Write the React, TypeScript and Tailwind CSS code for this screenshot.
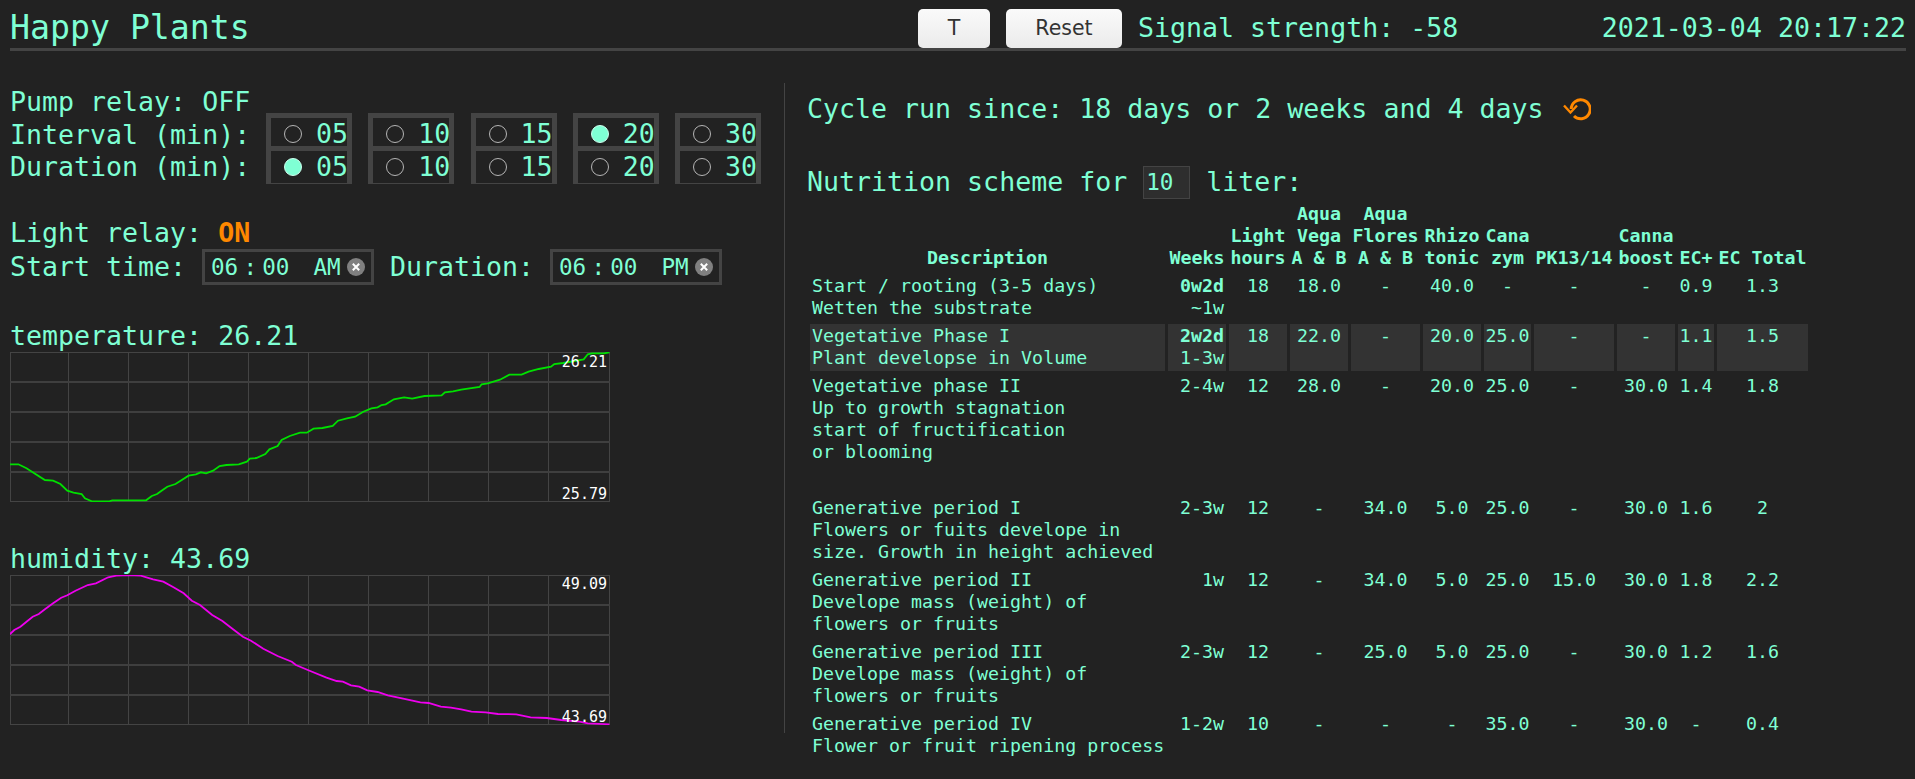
const intervals = ['05', '10', '15', '20', '30'];

const tempTrace = [
  [24, 463], [45, 463], [65, 475], [80, 487], [110, 510], [130, 512], [148, 522], [165, 542], [180, 548], [200, 552],
  [208, 565], [225, 574], [268, 574], [275, 571], [358, 571], [372, 558], [385, 552], [395, 543], [410, 530], [430, 522],
  [462, 497], [480, 493], [492, 487], [505, 490], [522, 482], [538, 468], [555, 465], [585, 463], [605, 455], [612, 446],
  [628, 444], [650, 432], [660, 418], [680, 408], [690, 390], [710, 378], [735, 368], [752, 368], [768, 356], [790, 354],
  [815, 348], [828, 332], [850, 325], [870, 320], [890, 305], [910, 295], [925, 292], [935, 285], [945, 283], [965, 268],
  [990, 262], [1010, 266], [1040, 258], [1082, 256], [1090, 247], [1110, 244], [1130, 239], [1175, 231], [1180, 223], [1195, 220],
  [1225, 209], [1248, 194], [1278, 194], [1295, 185], [1320, 177], [1350, 170], [1358, 162], [1380, 159], [1430, 148], [1440, 133],
  [1450, 130], [1480, 130], [1493, 127],
];

const humidityTrace = [
  [24, 313], [35, 300], [50, 290], [65, 275], [80, 260], [95, 252], [110, 238], [130, 220], [150, 203], [165, 196],
  [185, 182], [215, 165], [235, 160], [265, 142], [285, 137], [315, 135], [345, 137], [375, 148], [400, 155], [425, 172],
  [450, 190], [470, 212], [490, 225], [520, 255], [545, 273], [570, 297], [595, 320], [615, 332], [645, 356], [680, 378],
  [715, 395], [725, 405], [760, 423], [800, 443], [825, 453], [840, 455], [860, 466], [880, 470], [900, 481], [925, 486],
  [950, 496], [985, 505], [1030, 517], [1050, 519], [1080, 530], [1105, 533], [1130, 538], [1155, 545], [1190, 547], [1220, 552],
  [1265, 553], [1300, 562], [1340, 564], [1375, 570], [1420, 575], [1440, 580], [1493, 583],
];

const rows = [
  { desc: ['Start / rooting (3-5 days)', 'Wetten the substrate'], bold: '0w2d', weeks: '~1w', vals: ['18', '18.0', '-', '40.0', '-', '-', '-', '0.9', '1.3'] },
  { desc: ['Vegetative Phase I', 'Plant developse in Volume'], bold: '2w2d', weeks: '1-3w', vals: ['18', '22.0', '-', '20.0', '25.0', '-', '-', '1.1', '1.5'], active: true },
  { desc: ['Vegetative phase II', 'Up to growth stagnation', 'start of fructification', 'or blooming'], weeks: '2-4w', vals: ['12', '28.0', '-', '20.0', '25.0', '-', '30.0', '1.4', '1.8'], tall: true },
  { desc: ['Generative period I', 'Flowers or fuits develope in', 'size. Growth in height achieved'], weeks: '2-3w', vals: ['12', '-', '34.0', '5.0', '25.0', '-', '30.0', '1.6', '2'] },
  { desc: ['Generative period II', 'Develope mass (weight) of', 'flowers or fruits'], weeks: '1w', vals: ['12', '-', '34.0', '5.0', '25.0', '15.0', '30.0', '1.8', '2.2'] },
  { desc: ['Generative period III', 'Develope mass (weight) of', 'flowers or fruits'], weeks: '2-3w', vals: ['12', '-', '25.0', '5.0', '25.0', '-', '30.0', '1.2', '1.6'] },
  { desc: ['Generative period IV', 'Flower or fruit ripening process'], weeks: '1-2w', vals: ['10', '-', '-', '-', '35.0', '-', '30.0', '-', '0.4'] },
];

const headers = [
  ['Light', 'hours'], ['Aqua', 'Vega', 'A & B'], ['Aqua', 'Flores', 'A & B'], ['Rhizo', 'tonic'], ['Cana', 'zym'],
  ['PK13/14'], ['Canna', 'boost'], ['EC+'], ['EC Total'],
];

const colWidths = [355, 58, 58, 58, 69, 58, 47, 80, 58, 36, 91];

function Radio({ label, checked }: { label: string; checked?: boolean }) {
  return (
    <div className="flex h-[32px] items-center pl-[13px]">
      {checked ? (
        <span className="h-[18px] w-[18px] shrink-0 rounded-full border border-[#cfe] bg-[#7fffd4]" />
      ) : (
        <span className="h-[18px] w-[18px] shrink-0 rounded-full border border-[#b5b5b5]" />
      )}
      <span className="ml-[14px]">{label}</span>
    </div>
  );
}

function RadioColumn({ label, top, bottom }: { label: string; top?: boolean; bottom?: boolean }) {
  return (
    <div className="w-[86px] border-x-[5px] border-[#444]">
      <div className="h-[33px] border-t-[5px] border-[#444]">
        <Radio label={label} checked={top} />
      </div>
      <div className="h-[38px] border-y border-t-[5px] border-[#444]">
        <Radio label={label} checked={bottom} />
      </div>
    </div>
  );
}

function TimeInput({ period }: { period: string }) {
  return (
    <div className="flex h-[36px] w-[172px] items-center border-[3px] border-[#444] pl-[6px] text-[22.6px] leading-[28px]">
      <span>06</span>
      <span className="w-[24px] text-center">:</span>
      <span>00</span>
      <span className="ml-[24px]">{period}</span>
      <svg className="ml-[6px] shrink-0" width="18" height="18" viewBox="0 0 18 18">
        <circle cx="9" cy="9" r="9" fill="#808080" />
        <path d="M5.8 5.8l6.4 6.4M12.2 5.8l-6.4 6.4" stroke="#fff" strokeWidth="2" />
      </svg>
    </div>
  );
}

function Chart({ trace, yShift, color, max, min, maxY, minY }: {
  trace: number[][];
  yShift: number;
  color: string;
  max: string;
  min: string;
  maxY: number;
  minY: number;
}) {
  const points = trace.map(([x, y]) => `${(x / 2.45 - 10).toFixed(1)},${(y / 3 - yShift).toFixed(1)}`).join(' ');

  return (
    <svg className="block" width="600" height="150" viewBox="0 0 600 150">
      <rect x="0.5" y="0.5" width="599" height="149" fill="none" stroke="#444" />
      {[1, 2, 3, 4, 5, 6, 7, 8, 9].map((i) => (
        <line key={i} x1={i * 60 - 1.5} x2={i * 60 - 1.5} y1="0" y2="150" stroke="#444" />
      ))}
      {[1, 2, 3, 4].map((i) => (
        <line key={i} x1="0" x2="600" y1={i * 30} y2={i * 30} stroke="#3f3f3f" strokeWidth="2" />
      ))}
      <polyline points={points} fill="none" stroke={color} strokeWidth="1.8" />
      <text x="597" y={maxY} textAnchor="end" fill="#fff" fontSize="15" fontFamily="'DejaVu Sans Mono', monospace">{max}</text>
      <text x="597" y={minY} textAnchor="end" fill="#fff" fontSize="15" fontFamily="'DejaVu Sans Mono', monospace">{min}</text>
    </svg>
  );
}

export default function App() {
  return (
    <div className="min-h-screen bg-[#222] pl-[10px] pr-[9px] font-['DejaVu_Sans_Mono',monospace] text-[26.6px] leading-[33px] text-[#7fffd4]">
      <header className="flex h-[51px] border-b-[3px] border-[#444]">
        <h1 className="w-[908px] text-[33.2px] leading-[56px]">Happy Plants</h1>
        <button className="mt-[9px] h-[39px] w-[72px] rounded-[5px] bg-gradient-to-b from-[#fafafa] to-[#ebebeb] font-['DejaVu_Sans',sans-serif] text-[20.5px] text-[#333]">T</button>
        <button className="ml-[16px] mt-[9px] h-[39px] w-[116px] rounded-[5px] bg-gradient-to-b from-[#fafafa] to-[#ebebeb] font-['DejaVu_Sans',sans-serif] text-[20.5px] text-[#333]">Reset</button>
        <div className="ml-[16px] leading-[56px]">Signal strength: -58</div>
        <div className="ml-auto leading-[56px]">2021-03-04 20:17:22</div>
      </header>

      <div className="mt-[32px] flex">
        <div className="h-[650px] w-[775px] border-r border-[#444] pt-[2px]">
          <div className="flex items-end">
            <div className="w-[256px]">
              <div>Pump relay: OFF</div>
              <div>Interval (min):</div>
              <div className="h-[33px] leading-[31px]">Duration (min):</div>
            </div>
            <div className="flex gap-[16.25px] leading-[32px]">
              {intervals.map((label, i) => (
                <RadioColumn key={label} label={label} top={i === 3} bottom={i === 0} />
              ))}
            </div>
          </div>

          <div className="mt-[32px]">
            Light relay: <span className="font-bold text-[#ff8800]">ON</span>
          </div>
          <div className="flex h-[36px] items-center">
            <span className="w-[192px] pb-[2px]">Start time:</span>
            <TimeInput period="AM" />
            <span className="ml-[16px] w-[160px] pb-[2px]">Duration:</span>
            <TimeInput period="PM" />
          </div>

          <div className="mt-[34px]">temperature: 26.21</div>
          <Chart trace={tempTrace} yShift={42} color="#00e000" max="26.21" min="25.79" maxY={15} minY={147} />

          <div className="mt-[40px]">humidity: 43.69</div>
          <Chart trace={humidityTrace} yShift={45} color="#ee00ee" max="49.09" min="43.69" maxY={14} minY={147} />
        </div>

        <div className="pl-[22px] pt-[9px]">
          <div className="flex h-[33px] items-center">
            <span>Cycle run since: 18 days or 2 weeks and 4 days</span>
            <svg className="ml-[19px] shrink-0" width="28" height="24" viewBox="0 0 28 24" fill="none" stroke="#ff8800">
              <path d="M11 19A9.5 9.5 0 1 0 8.2 12" strokeWidth="3" />
              <path d="M1 8.5L7.5 15.5L14 8.5" strokeWidth="2.4" />
            </svg>
          </div>
          <div className="mt-[41px] flex h-[33px] items-center whitespace-pre">
            <span className="pb-[2px]">Nutrition scheme for </span>
            <span className="h-[33px] w-[47px] border border-[#444] bg-[#2e2e2e] pl-[2px] text-[22.6px] leading-[31px]">10</span>
            <span className="pb-[2px]"> liter:</span>
          </div>

          <table className="w-[1004px] table-fixed border-separate border-spacing-[3px] text-[18.3px] leading-[22px]">
            <colgroup>
              {colWidths.map((w, i) => (
                <col key={i} style={{ width: w }} />
              ))}
            </colgroup>
            <thead>
              <tr className="align-bottom">
                <th className="pb-[2px] pt-[1px] text-center">Description</th>
                <th className="pb-[2px] pt-[1px] text-center">Weeks</th>
                {headers.map((lines, i) => (
                  <th key={i} className="whitespace-nowrap pb-[2px] pt-[1px] text-center">
                    {lines.map((line) => (
                      <div key={line}>{line}</div>
                    ))}
                  </th>
                ))}
              </tr>
            </thead>
            <tbody>
              {rows.map((row) => (
                <tr key={row.desc[0]} className="align-top">
                  <td className={`whitespace-pre px-[2px] pb-[2px] pt-[1px] ${row.active ? 'bg-[#333]' : ''} ${row.tall ? 'h-[119px]' : ''}`}>
                    {row.desc.map((line) => (
                      <div key={line}>{line}</div>
                    ))}
                  </td>
                  <td className={`pb-[2px] pr-[2px] pt-[1px] text-right ${row.active ? 'bg-[#333]' : ''}`}>
                    {row.bold && <div className="font-bold">{row.bold}</div>}
                    <div>{row.weeks}</div>
                  </td>
                  {row.vals.map((val, i) => (
                    <td key={i} className={`pb-[2px] pt-[1px] text-center ${row.active ? 'bg-[#333]' : ''}`}>
                      {val}
                    </td>
                  ))}
                </tr>
              ))}
            </tbody>
          </table>
        </div>
      </div>
    </div>
  );
}
